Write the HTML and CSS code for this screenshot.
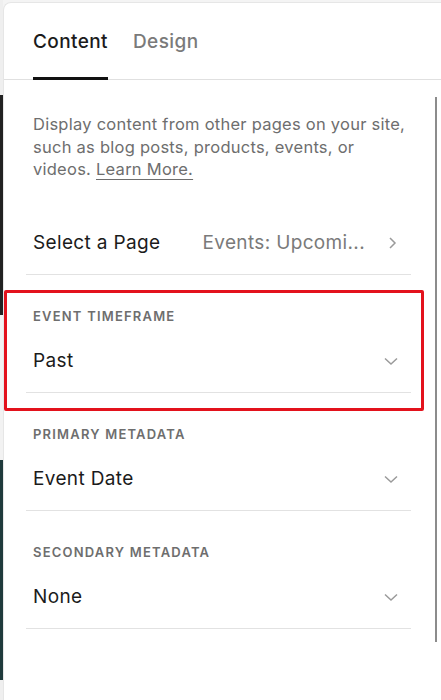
FILE: index.html
```html
<!DOCTYPE html>
<html>

<head>
    <meta charset="UTF-8">
    <title>Summary block settings</title>
    <meta name="viewport" content="width=device-width,initial-scale=1" />
    <link rel="stylesheet" href="styles.css">
</head>

<body>

    <div class="panel">
        <div class="tabs">
            <span class="tab active">Content</span>
            <span class="tab">Design</span>
        </div>

        <div class="panel-body">
            <div class="fields">
                <p class="intro">
                    Display content from other pages on your site, such as blog posts, products, events, or
                    videos. <a href="#" class="learn-more">Learn More.</a>
                </p>

                <div class="link-row">
                    <span class="row-label">Select a Page</span>
                    <span class="row-value">Events: Upcomi...</span>
                    <svg class="chevron" width="14" height="14" viewBox="0 0 14 14">
                        <path d="M5 2 L10 7 L5 12" fill="none" stroke="#9a9a9a" stroke-width="1.5" />
                    </svg>
                </div>

                <div class="field highlighted">
                    <div class="field-label">Event Timeframe</div>
                    <div class="field-select">
                        <span>Past</span>
                        <svg class="chevron" width="16" height="16" viewBox="0 0 16 16">
                            <path d="M2 5.5 L8 11 L14 5.5" fill="none" stroke="#9a9a9a" stroke-width="1.5" />
                        </svg>
                    </div>
                </div>

                <div class="field">
                    <div class="field-label">Primary Metadata</div>
                    <div class="field-select">
                        <span>Event Date</span>
                        <svg class="chevron" width="16" height="16" viewBox="0 0 16 16">
                            <path d="M2 5.5 L8 11 L14 5.5" fill="none" stroke="#9a9a9a" stroke-width="1.5" />
                        </svg>
                    </div>
                </div>

                <div class="field">
                    <div class="field-label">Secondary Metadata</div>
                    <div class="field-select">
                        <span>None</span>
                        <svg class="chevron" width="16" height="16" viewBox="0 0 16 16">
                            <path d="M2 5.5 L8 11 L14 5.5" fill="none" stroke="#9a9a9a" stroke-width="1.5" />
                        </svg>
                    </div>
                </div>
            </div>

            <div class="scrollbar"><span></span></div>
        </div>
    </div>

</body>

</html>
```

FILE: styles.css
```css
* {
    box-sizing: border-box;
}

html,
body {
    margin: 0;
    padding: 0;
    height: 100%;
}

body {
    font-family: "Inter", "Liberation Sans", sans-serif;
    color: #1b1b1b;
    /* the editor canvas peeking out behind the panel */
    background: linear-gradient(to bottom,
            #efefef 0, #efefef 95px,
            #222 95px, #222 315px,
            #f2f2f2 315px, #f2f2f2 460px,
            #1f3a3c 460px, #1f3a3c 680px,
            #efefef 680px);
    background-size: 3px 100%;
    background-repeat: no-repeat;
    background-color: #f4f4f4;
    padding-top: 2px;
    padding-left: 3px;
}

.panel {
    height: 698px;
    background: #fff;
    border-top: 1px solid #e6e6e6;
    border-left: 1px solid #e6e6e6;
    border-radius: 8px 0 0 0;
    display: flex;
    flex-direction: column;
}

.tabs {
    display: flex;
    gap: 25px;
    padding: 27px 0 0 29px;
    border-bottom: 1px solid #e0e0e0;
}

.tab {
    font-size: 19px;
    line-height: 24px;
    font-weight: 500;
    letter-spacing: 0.4px;
    color: #7a7a7a;
    padding-bottom: 23px;
    border-bottom: 3px solid transparent;
    margin-bottom: -1px;
}

.tab.active {
    color: #1b1b1b;
    border-bottom-color: #111;
}

.panel-body {
    flex: 1;
    display: flex;
}

.fields {
    flex: 1;
    padding: 33px 21px 0 22px;
}

.intro {
    margin: 0 0 0 7px;
    font-size: 16.5px;
    line-height: 22.5px;
    letter-spacing: 0.25px;
    color: #6e6e6e;
}

.learn-more {
    color: #6e6e6e;
    text-decoration: underline;
    text-decoration-thickness: 1px;
    text-underline-offset: 4px;
}

.link-row {
    display: flex;
    align-items: center;
    margin-top: 50px;
    padding: 0 12px 19px 7px;
    border-bottom: 1px solid #e2e2e2;
    font-size: 19px;
    line-height: 24px;
    letter-spacing: 0.35px;
}

.row-label {
    flex: 1;
}

.row-value {
    color: #7a7a7a;
    margin-right: 20px;
}

.field {
    position: relative;
    padding: 33px 0 0 0;
    border-bottom: 1px solid #e2e2e2;
}

.field.highlighted::before {
    content: "";
    position: absolute;
    top: 15px;
    left: -22px;
    right: -13px;
    bottom: -19px;
    border: 3px solid #e3121c;
    border-radius: 2px;
}

.field-label {
    margin-left: 7px;
    font-size: 13px;
    line-height: 16px;
    font-weight: 600;
    letter-spacing: 1.2px;
    text-transform: uppercase;
    color: #6e6e6e;
}

.field-select {
    display: flex;
    align-items: center;
    justify-content: space-between;
    margin-top: 25px;
    padding: 0 12px 19px 7px;
    font-size: 19px;
    line-height: 24px;
    letter-spacing: 0.35px;
}

.scrollbar {
    width: 9px;
    padding: 17px 0 58px 3px;
}

.scrollbar span {
    display: block;
    width: 2px;
    height: 100%;
    background: #8c8c8c;
}
```
